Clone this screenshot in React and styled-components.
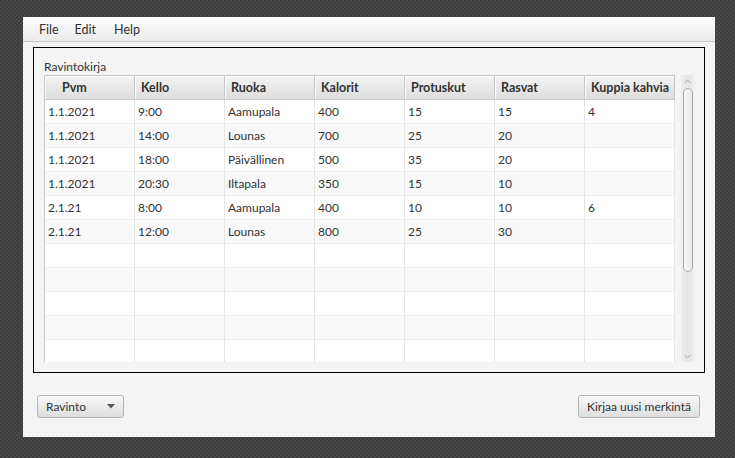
import React from "react";
import styled, { createGlobalStyle } from "styled-components";

const Global = createGlobalStyle`
  html, body {
    margin: 0;
    padding: 0;
    width: 735px;
    height: 458px;
    overflow: hidden;
    background-color: #434343;
    background-image: conic-gradient(#4a4a4a 25%, #3c3c3c 0 50%, #4a4a4a 0 75%, #3c3c3c 0);
    background-size: 4px 4px;
    font-family: "Lato", "Open Sans", sans-serif;
  }
  #root { padding: 17px 0 0 23px; }
`;

const Window = styled.div`
  width: 692px;
  height: 420px;
  background: #f4f4f4;
  display: flex;
  flex-direction: column;
`;

const MenuBar = styled.div`
  height: 24px;
  display: flex;
  align-items: center;
  padding-left: 8px;
  background: linear-gradient(#fcfcfc, #ebebeb);
  border-bottom: 1px solid #c6c6c6;
`;

const MenuItem = styled.div`
  font-size: 12.5px;
  color: #333;
  padding: 0 8px;
  margin-right: ${(p) => p.$gap || 0}px;
`;

const Content = styled.div`
  flex: 1;
  display: flex;
  flex-direction: column;
  padding: 5px 10px 0 10px;
`;

const Box = styled.div`
  border: 1px solid #000;
  height: 326px;
  box-sizing: border-box;
  padding: 10px;
  display: flex;
  flex-direction: column;
`;

const BoxLabel = styled.div`
  font-size: 12px;
  color: #333;
  height: 17px;
  line-height: 17px;
`;

const Table = styled.div`
  display: flex;
  height: 287px;
  border-left: 1px solid #c8c8c8;
  background: #f4f4f4;
`;

const Columns = styled.div`
  width: 630px;
  display: flex;
  flex-direction: column;
  overflow: hidden;
`;

const HeaderRow = styled.div`
  display: grid;
  grid-template-columns: repeat(7, 90px);
  grid-template-rows: 23px;
  height: 25px;
  box-sizing: border-box;
  border-top: 1px solid #c8c8c8;
  border-bottom: 1px solid #c8c8c8;
`;

const HeaderCell = styled.div`
  box-sizing: border-box;
  border-right: 1px solid #c8c8c8;
  box-shadow: inset 1px 1px 0 #fbfbfb;
  background: linear-gradient(#f4f4f4, #dddddd);
  font-size: 12.5px;
  font-weight: 700;
  color: #333;
  display: flex;
  align-items: center;
  white-space: nowrap;
  overflow: hidden;
  padding-left: ${(p) => p.$pad || 6}px;
`;

const Body = styled.div`
  flex: 1;
  overflow: hidden;
`;

const Row = styled.div`
  display: grid;
  grid-template-columns: repeat(7, 90px);
  grid-template-rows: 23px;
  height: 24px;
  box-sizing: border-box;
  border-bottom: 1px solid #ededed;
  background: ${(p) => (p.$odd ? "#f9f9f9" : "#ffffff")};
`;

const Cell = styled.div`
  box-sizing: border-box;
  border-right: 1px solid #e6e6e6;
  font-size: 12px;
  color: #333;
  display: flex;
  align-items: center;
  padding-left: 3px;
  white-space: nowrap;
  overflow: hidden;
`;

const ScrollCol = styled.div`
  flex: 1;
  display: flex;
  justify-content: flex-end;
`;

const Track = styled.div`
  width: 13px;
  background: linear-gradient(90deg, #eeeeee, #e4e4e4 50%, #eeeeee);
  display: flex;
  flex-direction: column;
  align-items: center;
`;

const Arrow = styled.div`
  height: 12px;
  display: flex;
  align-items: center;
  justify-content: center;
  width: 100%;
`;

const Thumb = styled.div`
  width: 10px;
  height: 184px;
  box-sizing: border-box;
  border: 1px solid #aaaaaa;
  border-radius: 5px;
  background: linear-gradient(90deg, #fafafa, #e6e6e6);
  margin-top: 1px;
`;

const Spacer = styled.div`
  flex: 1;
`;

const BottomBar = styled.div`
  display: flex;
  justify-content: space-between;
  align-items: center;
  padding: 22px 5px 0 4px;
`;

const Control = styled.div`
  height: 23px;
  box-sizing: border-box;
  border: 1px solid #b5b5b5;
  border-radius: 3px;
  background: linear-gradient(#f8f8f8, #dedede);
  box-shadow: inset 0 1px 0 #ffffff;
  display: flex;
  align-items: center;
  font-size: 12px;
  color: #333;
  padding: 0 8px;
  width: ${(p) => (p.$w ? p.$w + "px" : "auto")};
  justify-content: space-between;
  white-space: nowrap;
`;

const Chevron = ({ down }) => (
  <svg width="7" height="5" viewBox="0 0 7 5">
    <path
      d={down ? "M0.5 1 L3.5 4 L6.5 1" : "M0.5 4 L3.5 1 L6.5 4"}
      fill="none"
      stroke="#a8a8a8"
      strokeWidth="1"
    />
  </svg>
);

const headers = ["Pvm", "Kello", "Ruoka", "Kalorit", "Protuskut", "Rasvat", "Kuppia kahvia"];
const rows = [
  ["1.1.2021", "9:00", "Aamupala", "400", "15", "15", "4"],
  ["1.1.2021", "14:00", "Lounas", "700", "25", "20", ""],
  ["1.1.2021", "18:00", "Päivällinen", "500", "35", "20", ""],
  ["1.1.2021", "20:30", "Iltapala", "350", "15", "10", ""],
  ["2.1.21", "8:00", "Aamupala", "400", "10", "10", "6"],
  ["2.1.21", "12:00", "Lounas", "800", "25", "30", ""],
];
const allRows = [...rows, ...Array.from({ length: 5 }, () => Array(7).fill(""))];

export default function App() {
  return (
    <>
      <Global />
      <Window>
        <MenuBar>
          <MenuItem $gap={0}>File</MenuItem>
          <MenuItem $gap={2}>Edit</MenuItem>
          <MenuItem>Help</MenuItem>
        </MenuBar>
        <Content>
          <Box>
            <BoxLabel>Ravintokirja</BoxLabel>
            <Table>
              <Columns>
                <HeaderRow>
                  {headers.map((h, i) => (
                    <HeaderCell key={h} $pad={i === 0 ? 17 : 6}>
                      {h}
                    </HeaderCell>
                  ))}
                </HeaderRow>
                <Body>
                  {allRows.map((r, i) => (
                    <Row key={i} $odd={i % 2 === 1}>
                      {r.map((c, j) => (
                        <Cell key={j}>{c}</Cell>
                      ))}
                    </Row>
                  ))}
                </Body>
              </Columns>
              <ScrollCol>
                <Track>
                  <Arrow>
                    <Chevron />
                  </Arrow>
                  <Thumb />
                  <Spacer />
                  <Arrow>
                    <Chevron down />
                  </Arrow>
                </Track>
              </ScrollCol>
            </Table>
          </Box>
          <BottomBar>
            <Control $w={87}>
              Ravinto
              <svg width="8" height="5" viewBox="0 0 8 5">
                <path d="M0 0 L8 0 L4 4.5 Z" fill="#555" />
              </svg>
            </Control>
            <Control>Kirjaa uusi merkintä</Control>
          </BottomBar>
        </Content>
      </Window>
    </>
  );
}
